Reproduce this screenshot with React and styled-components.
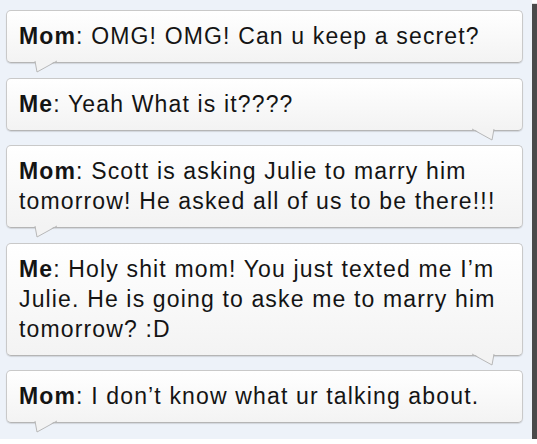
import React from "react";
import styled, { createGlobalStyle } from "styled-components";

const Global = createGlobalStyle`
  html, body { margin: 0; padding: 0; background: #ffffff; }
  body { font-family: "Liberation Sans", Arial, sans-serif; }
`;

const Frame = styled.div`
  width: 532px;
  height: 439px;
  box-sizing: border-box;
  background: #edf2f9;
  box-shadow: 5px 4px 1px #4a4a4a;
  padding: 10px 0 0 6px;
  display: flex;
  flex-direction: column;
  gap: 14.5px;
`;

const Bubble = styled.div`
  position: relative;
  width: 517px;
  box-sizing: border-box;
  padding: 10px 10px 11px 12px;
  border: 1px solid #c9c9c9;
  border-bottom-color: #b5b5b5;
  border-radius: 5px;
  background: linear-gradient(#ffffff, #f3f3f3);
  box-shadow: 0 1px 1px rgba(0, 0, 0, 0.12);
  color: #141414;
  font-size: 23px;
  line-height: 30px;
  letter-spacing: 1.15px;
`;

const Line = styled.div`
  white-space: nowrap;
`;

const Name = styled.b`
  font-weight: 700;
`;

const Tail = styled.svg`
  position: absolute;
  top: calc(100% - 2px);
  ${(p) => (p.$side === "left" ? "left: 27px;" : "right: 27px;")}
  width: 24px;
  height: 13px;
  overflow: visible;
`;

function TailShape({ side }) {
  const fillPts = side === "left" ? "1,0 3,12 23,0" : "23,0 21,12 1,0";
  const strokeD = side === "left" ? "M1 1 L3 12 L23 1" : "M23 1 L21 12 L1 1";
  return (
    <Tail $side={side} viewBox="0 0 24 13">
      <polygon points={fillPts} fill="#f3f3f3" />
      <path d={strokeD} fill="none" stroke="#b8b8b8" strokeWidth="1" />
    </Tail>
  );
}

const messages = [
  { who: "Mom", lines: ["OMG! OMG! Can u keep a secret?"], tail: "left" },
  { who: "Me", lines: ["Yeah What is it????"], tail: "right" },
  {
    who: "Mom",
    lines: ["Scott is asking Julie to marry him", "tomorrow! He asked all of us to be there!!!"],
    tail: "left",
  },
  {
    who: "Me",
    lines: [
      "Holy shit mom! You just texted me I\u2019m",
      "Julie. He is going to aske me to marry him",
      "tomorrow? :D",
    ],
    tail: "right",
  },
  { who: "Mom", lines: ["I don\u2019t know what ur talking about."], tail: "left" },
];

export default function App() {
  return (
    <>
      <Global />
      <Frame>
        {messages.map((m, i) => (
          <Bubble key={i}>
            {m.lines.map((l, j) => (
              <Line key={j}>
                {j === 0 ? (
                  <>
                    <Name>{m.who}</Name>: {l}
                  </>
                ) : (
                  l
                )}
              </Line>
            ))}
            <TailShape side={m.tail} />
          </Bubble>
        ))}
      </Frame>
    </>
  );
}
